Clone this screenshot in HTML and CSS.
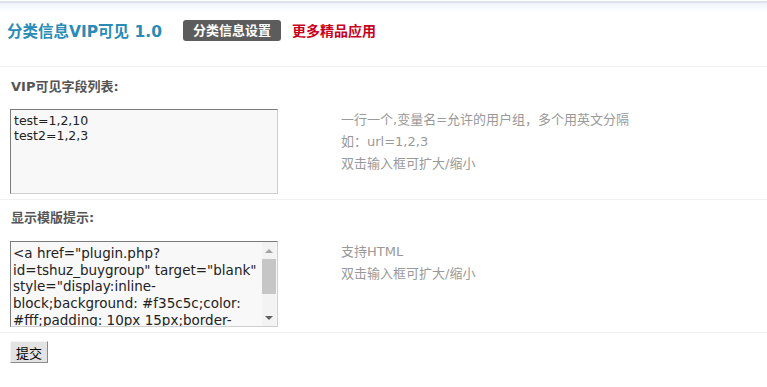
FILE: index.html
```html
<!DOCTYPE html>
<html>

	<head>
		<meta charset="UTF-8">
		<title>分类信息VIP可见</title>
		<link rel="stylesheet" href="styles.css">
	</head>

	<body>
		<div class="topbar"></div>
		<div class="hd">
			<h3>分类信息VIP可见 1.0</h3>
			<a class="tag" href="#">分类信息设置</a>
			<a class="more" href="#">更多精品应用</a>
		</div>
		<form class="form">
			<div class="row first">
				<div class="label">VIP可见字段列表:</div>
				<div class="body">
					<textarea class="txt small">test=1,2,10
test2=1,2,3</textarea>
					<div class="tips">
						<p>一行一个,变量名=允许的用户组，多个用英文分隔</p>
						<p>如：url=1,2,3</p>
						<p>双击输入框可扩大/缩小</p>
					</div>
				</div>
			</div>
			<div class="row">
				<div class="label">显示模版提示:</div>
				<div class="body">
					<div class="txtbox">
						<textarea class="txt big">&lt;a href="plugin.php?id=tshuz_buygroup" target="blank" style="display:inline-block;background: #f35c5c;color: #fff;padding: 10px 15px;border-radius: 3px;"&gt;购买VIP用户组&lt;/a&gt;</textarea>
						<div class="sbar">
							<span class="arr up"></span>
							<span class="thumb"></span>
							<span class="arr down"></span>
						</div>
					</div>
					<div class="tips">
						<p>支持HTML</p>
						<p>双击输入框可扩大/缩小</p>
					</div>
				</div>
			</div>
			<div class="submit">
				<button type="button" class="btn">提交</button>
			</div>
		</form>
	</body>

</html>
```
FILE: styles.css
```css
html,
body {
	margin: 0;
	background: #fff;
	font-family: "DejaVu Sans", "Noto Sans CJK SC", sans-serif;
	font-size: 12px;
	color: #555;
}

p {
	margin: 0;
}

.topbar {
	margin-top: 1px;
	height: 9px;
	border-top: 2px solid #dde3ea;
	background: linear-gradient(#eef4fa, #fff);
}

.hd {
	display: flex;
	align-items: center;
	height: 36px;
	padding: 0 0 18px 7px;
	border-bottom: 1px solid #f2f2f2;
}

.hd h3 {
	margin: 0;
	font-size: 15.5px;
	font-weight: bold;
	color: #2a8cb6;
}

.tag {
	margin-left: 21px;
	height: 21px;
	line-height: 21px;
	padding: 0 10px;
	border-radius: 3px;
	background: #5c5c5c;
	color: #fff;
	font-size: 13px;
	font-weight: bold;
	text-decoration: none;
}

.more {
	margin-left: 11px;
	color: #c8001e;
	font-size: 14px;
	font-weight: bold;
	text-decoration: none;
}

.row {
	border-bottom: 1px solid #f0f0f0;
	padding: 10px 0 5px;
}

.row.first {
	padding-top: 12px;
}

.label {
	padding-left: 11px;
	line-height: 16px;
	font-size: 13px;
	font-weight: bold;
	color: #555;
}

.body {
	display: flex;
	align-items: flex-start;
	padding: 14px 0 0 10px;
}

.row + .row .body {
	padding-top: 15px;
}

.txt {
	display: block;
	margin: 0;
	width: 268px;
	box-sizing: border-box;
	resize: none;
	padding: 3px 3px;
	border: 1px solid;
	border-color: #7b7b7b #cfcfcf #cfcfcf #7b7b7b;
	background: #f8f8f8;
	color: #222;
	font-family: "DejaVu Sans", sans-serif;
	outline: none;
}

.txt.small {
	height: 85px;
	font-size: 12.5px;
	line-height: 15px;
}

.txtbox {
	display: flex;
	width: 268px;
	height: 86px;
	box-sizing: border-box;
	border: 1px solid;
	border-color: #7b7b7b #cfcfcf #cfcfcf #7b7b7b;
	background: #f8f8f8;
}

.txt.big {
	flex: 1;
	width: auto;
	height: 100%;
	border: 0;
	padding: 3px 2px 0;
	font-size: 13.5px;
	line-height: 16.7px;
	overflow: hidden;
}

.sbar {
	width: 14px;
	margin-right: 1px;
	display: flex;
	flex-direction: column;
	align-items: center;
	background: #f3f3f3;
}

.arr {
	width: 0;
	height: 0;
	border-left: 4px solid transparent;
	border-right: 4px solid transparent;
	margin: 7px 0 6px;
}

.arr.up {
	border-bottom: 4px solid #a3a3a3;
}

.arr.down {
	border-top: 4px solid #606060;
	margin: auto 0 6px;
}

.thumb {
	width: 14px;
	height: 35px;
	background: #c6c6c6;
}

.tips {
	margin-left: 63px;
	color: #999;
	font-size: 13px;
	line-height: 22px;
}

.submit {
	padding: 8px 10px;
}

.btn {
	height: 22px;
	width: 38px;
	padding: 0;
	font-family: "Noto Sans CJK SC", sans-serif;
	font-size: 13px;
	color: #000;
	background: #e3e3e3;
	border: 1px solid;
	border-color: #f4f4f4 #8a8a8a #8a8a8a #f4f4f4;
}
```
